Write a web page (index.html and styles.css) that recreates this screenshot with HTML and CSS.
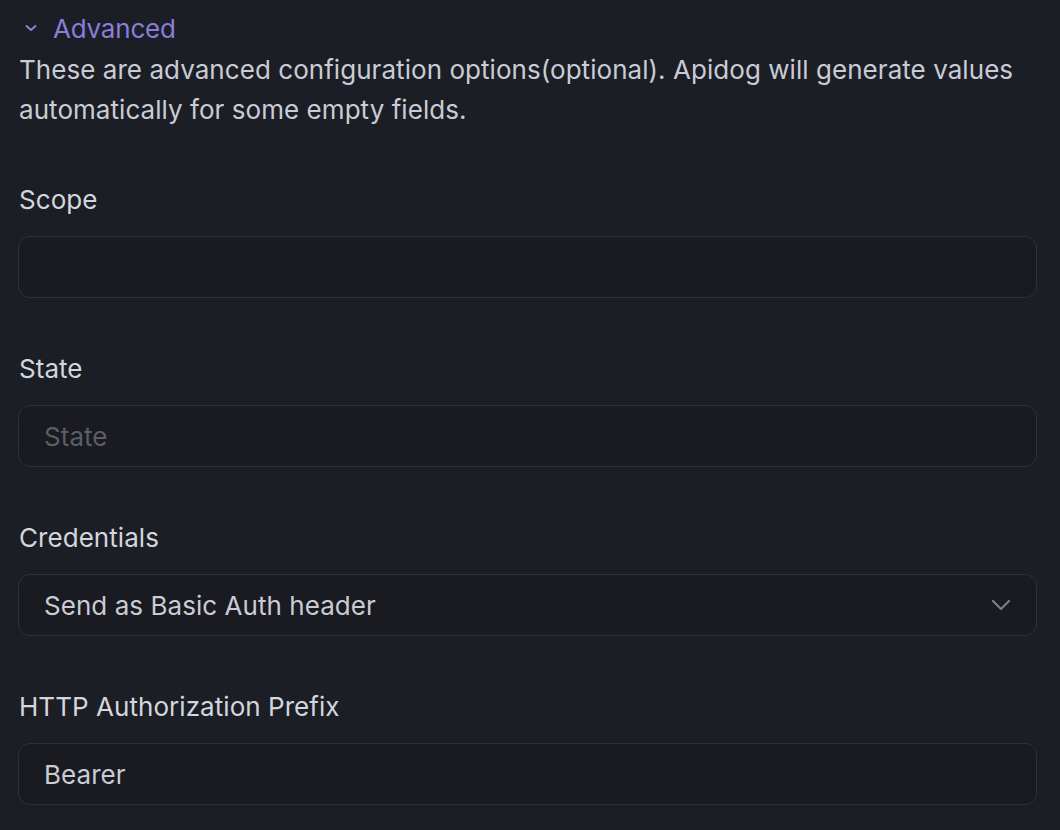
FILE: index.html
```html
<!DOCTYPE html>
<html lang="en">
<head>
<meta charset="utf-8">
<title>Advanced</title>
<link rel="stylesheet" href="styles.css">
</head>
<body>
<div class="panel">
  <div class="toggle">
    <svg class="toggle-icon" width="14" height="10" viewBox="0 0 14 10"><path d="M2.5 3 L7 7 L11.5 3" fill="none" stroke="currentColor" stroke-width="2" stroke-linecap="round" stroke-linejoin="round"/></svg>
    <span>Advanced</span>
  </div>
  <p class="desc">These are advanced configuration options(optional). Apidog will generate values automatically for some empty fields.</p>

  <div class="field">
    <div class="label">Scope</div>
    <div class="input"></div>
  </div>
  <div class="field">
    <div class="label">State</div>
    <div class="input placeholder">State</div>
  </div>
  <div class="field">
    <div class="label">Credentials</div>
    <div class="input select">
      <span>Send as Basic Auth header</span>
      <svg class="select-icon" width="20" height="12" viewBox="0 0 20 12"><path d="M2 2 L10 10 L18 2" fill="none" stroke="currentColor" stroke-width="2.2" stroke-linecap="round" stroke-linejoin="round"/></svg>
    </div>
  </div>
  <div class="field">
    <div class="label">HTTP Authorization Prefix</div>
    <div class="input">Bearer</div>
  </div>
</div>
</body>
</html>
```

FILE: styles.css
```css
html, body {
  margin: 0;
  padding: 0;
  background: #1c1e26;
}
body {
  font-family: Inter, "Noto Sans", sans-serif;
  font-size: 26px;
  line-height: 40px;
  letter-spacing: 0.05px;
  color: #c9ccd5;
}
.panel {
  padding: 10px 23px 0 18px;
}
.toggle {
  display: flex;
  align-items: center;
  color: #8b7dd8;
  height: 40px;
  margin-top: -1px;
  margin-bottom: 1px;
  letter-spacing: -0.2px;
}
.toggle-icon {
  margin-left: 6px;
  margin-right: 15px;
  margin-top: -2px;
  color: #8b7dd8;
}
.desc {
  margin: 0 0 0 1px;
  color: #c9ccd5;
}
.field {
  margin-top: 49px;
}
.field + .field {
  margin-top: 50px;
}
.label {
  height: 40px;
  padding-left: 1px;
  padding-top: 1px;
  margin-bottom: -1px;
  color: #d3d6dd;
}
.input {
  margin-top: 17px;
  height: 58px;
  box-sizing: content-box;
  border: 1px solid #2f303b;
  border-radius: 12px;
  background: #1a1a21;
  padding: 2px 25px 0;
  display: flex;
  align-items: center;
  color: #c9ccd5;
}
.placeholder {
  color: #5b5e69;
}
.select {
  justify-content: space-between;
}
.select-icon {
  color: #7c7f89;
  margin-right: 0;
  margin-top: -2px;
}
```
